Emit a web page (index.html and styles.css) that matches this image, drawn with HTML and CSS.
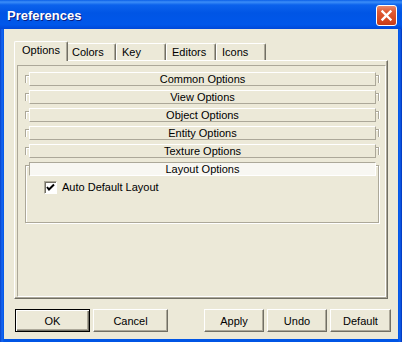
FILE: index.html
```html
<!DOCTYPE html>
<html lang="en">

<head>
  <meta charset="UTF-8" />
  <title>Preferences</title>
  <link rel="stylesheet" href="styles.css">
</head>

<body>
  <div class="window">
    <div class="titlebar">
      <span class="title">Preferences</span>
      <button class="close-btn" aria-label="Close">
        <svg width="13" height="13" viewBox="0 0 13 13">
          <path d="M2.5 2.5 L10.5 10.5 M10.5 2.5 L2.5 10.5" stroke="#fff" stroke-width="2.4" stroke-linecap="square" />
        </svg>
      </button>
    </div>

    <div class="client">
      <div class="tabs">
        <div class="tab active">Options</div>
        <div class="tab">Colors</div>
        <div class="tab">Key</div>
        <div class="tab">Editors</div>
        <div class="tab">Icons</div>
      </div>

      <div class="tab-panel">
        <div class="options-frame">
          <div class="group">
            <div class="group-head">Common Options</div>
          </div>
          <div class="group">
            <div class="group-head">View Options</div>
          </div>
          <div class="group">
            <div class="group-head">Object Options</div>
          </div>
          <div class="group">
            <div class="group-head">Entity Options</div>
          </div>
          <div class="group">
            <div class="group-head">Texture Options</div>
          </div>
          <div class="group open">
            <div class="group-head">Layout Options</div>
            <label class="check">
              <span class="check-box">
                <svg width="11" height="11" viewBox="0 0 11 11">
                  <path d="M2 5 L4 7.5 L9 2.5" fill="none" stroke="#000" stroke-width="2" />
                </svg>
              </span>
              Auto Default Layout
            </label>
          </div>
        </div>
      </div>

      <div class="buttons">
        <div class="btn-group">
          <button class="btn default">OK</button>
          <button class="btn">Cancel</button>
        </div>
        <div class="btn-group">
          <button class="btn btn-sm">Apply</button>
          <button class="btn btn-sm">Undo</button>
          <button class="btn btn-sm btn-last">Default</button>
        </div>
      </div>
    </div>
  </div>
</body>

</html>
```

FILE: styles.css
```css
body {
  margin: 0;
  font-family: 'Liberation Sans', Arial, sans-serif;
  font-size: 11px;
  color: #000;
}

.window {
  width: 402px;
  height: 342px;
  box-sizing: border-box;
  display: flex;
  flex-direction: column;
  background: linear-gradient(to right, #0842c8 0px, #1667f2 2px, #0055e5 4px, #0055e5 398px, #1060ee 400px, #0033b8 402px);
}

.titlebar {
  height: 29px;
  box-sizing: border-box;
  padding: 1px 5px 0 7px;
  display: flex;
  align-items: center;
  justify-content: space-between;
  background: linear-gradient(to bottom, #0a5fe7 0%, #3c8ef8 7%, #0b62ec 17%, #0055e5 45%, #0057ea 85%, #0048d8 100%);
}

.title {
  color: #fff;
  font-weight: bold;
  font-size: 13px;
  text-shadow: 1px 1px 0 #0a1d80;
}

.close-btn {
  width: 21px;
  height: 21px;
  padding: 0;
  display: flex;
  align-items: center;
  justify-content: center;
  border: 1px solid #fff;
  border-radius: 3px;
  background: linear-gradient(to bottom, #e98a6c 0%, #e05a33 30%, #d2461f 80%, #c43a18 100%);
}

.client {
  flex: 1;
  margin: 0 4px 3px 4px;
  padding-top: 12px;
  background-color: #ece9d8;
  display: flex;
  flex-direction: column;
}

.tabs {
  height: 19px;
  padding-left: 12px;
  display: flex;
  align-items: flex-end;
}

.tab {
  width: 50px;
  height: 17px;
  box-sizing: border-box;
  padding: 1px 0 0 5px;
  line-height: 14px;
  background-color: #ece9d8;
  border-top: 1px solid #fff;
  border-left: 1px solid #fff;
  border-right: 1px solid #716f64;
  border-radius: 2px 2px 0 0;
  box-shadow: inset -1px 0 0 #aca899;
}

.tab.active {
  position: relative;
  z-index: 1;
  width: 54px;
  height: 20px;
  margin: 0 -2px -1px -2px;
  padding-left: 7px;
}

.tab-panel {
  height: 239px;
  box-sizing: border-box;
  margin: 0 10px;
  padding: 4px 1px 1px 2px;
  display: flex;
  flex-direction: column;
  border-top: 1px solid #fff;
  border-left: 1px solid #fff;
  border-right: 1px solid #716f64;
  border-bottom: 1px solid #716f64;
  box-shadow: inset -1px -1px 0 #aca899;
}

.options-frame {
  flex: 1;
  padding: 6px 5px 0 7px;
  border-top: 1px solid #aca899;
  border-left: 1px solid #aca899;
  border-right: 1px solid #fff;
  border-bottom: 1px solid #fff;
}

.group {
  position: relative;
  padding: 0 4px 4px 4px;
}

.group::before {
  content: "";
  position: absolute;
  left: 0;
  right: 1px;
  top: 3px;
  height: 7px;
  border: 1px solid #aca899;
  border-bottom: 0;
  box-shadow: inset 1px 1px 0 #fff, 1px 0 0 #fff;
}

.group.open {
  padding-bottom: 30px;
}

.group.open::before {
  height: auto;
  bottom: 1px;
  border-bottom: 1px solid #aca899;
  box-shadow: inset 1px 1px 0 #fff, 1px 1px 0 #fff;
}

.group-head {
  position: relative;
  height: 14px;
  box-sizing: border-box;
  line-height: 12px;
  text-align: center;
  background-color: #ece9d8;
  border-top: 1px solid #fff;
  border-left: 1px solid #fff;
  border-right: 1px solid #aca899;
  border-bottom: 1px solid #aca899;
}

.group.open .group-head {
  background-color: #f8f7f2;
  border-top-color: #aca899;
  border-left-color: #aca899;
  border-right-color: #fff;
  border-bottom-color: #fff;
}

.check {
  position: relative;
  display: flex;
  align-items: center;
  gap: 5px;
  margin: 5px 0 0 15px;
  line-height: 13px;
}

.check-box {
  width: 13px;
  height: 13px;
  box-sizing: border-box;
  display: flex;
  align-items: center;
  justify-content: center;
  background-color: #fff;
  border: 1px solid;
  border-color: #aca899 #fff #fff #aca899;
  box-shadow: inset 1px 1px 0 #716f64;
}

.buttons {
  margin-top: 10px;
  padding: 0 7px 0 11px;
  display: flex;
  justify-content: space-between;
}

.btn-group {
  display: flex;
  gap: 3px;
}

.btn {
  width: 75px;
  height: 23px;
  box-sizing: border-box;
  padding: 0;
  font-family: 'Liberation Sans', Arial, sans-serif;
  font-size: 11px;
  color: #000;
  background-color: #ece9d8;
  border: 1px solid;
  border-color: #fff #716f64 #716f64 #fff;
  box-shadow: inset -1px -1px 0 #aca899;
}

.btn.default {
  border-color: #000;
  box-shadow: inset 1px 1px 0 #fff, inset -1px -1px 0 #716f64, inset -2px -2px 0 #aca899;
}

.btn-sm {
  width: 60px;
}

.btn-last {
  width: 61px;
}
```
